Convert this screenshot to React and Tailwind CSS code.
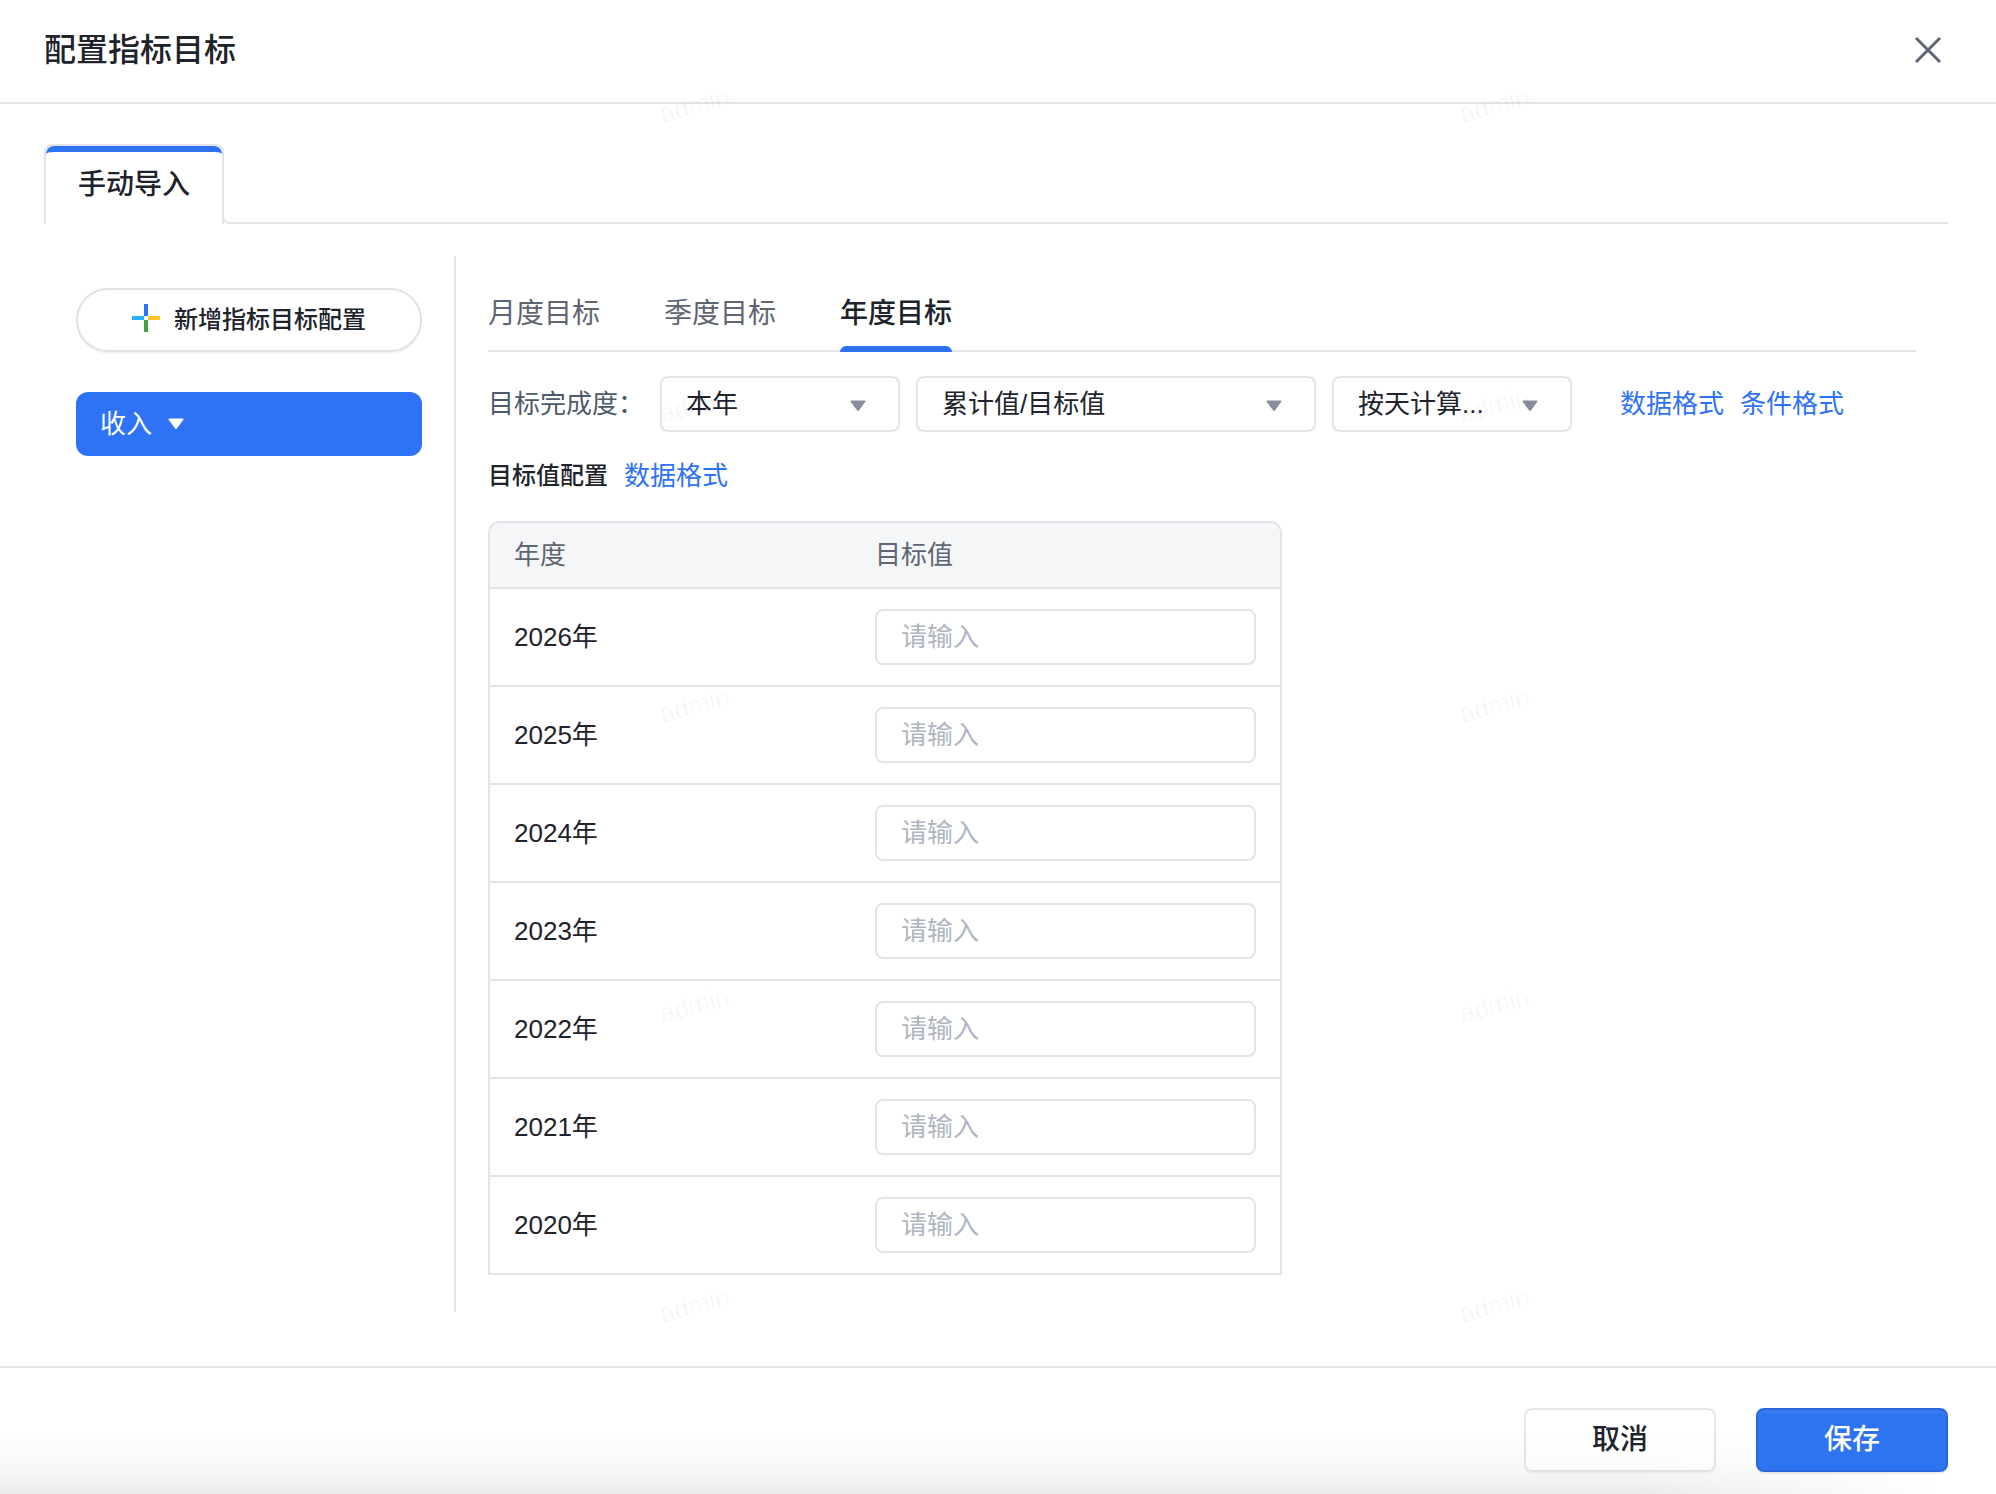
import { useState } from "react";

const YEARS = [2026, 2025, 2024, 2023, 2022, 2021, 2020];
const TABS = ["月度目标", "季度目标", "年度目标"];
const MARKS = Array.from({ length: 10 }, (_, i) => i);

function Caret({ className }) {
  return (
    <svg viewBox="0 0 16 12" className={className} fill="currentColor" aria-hidden="true">
      <path d="M1.4 .5h13.2c.8 0 1.1.9.6 1.5L8.9 10.6c-.5.6-1.3.6-1.8 0L.8 2C.3 1.4.6.5 1.4.5z" />
    </svg>
  );
}

function Select({ id, label, options, className }) {
  return (
    <div className={`relative ${className}`}>
      <select
        id={id}
        aria-label={label}
        className="block h-14 w-full appearance-none rounded-lg border-2 border-[#e3e3ea] bg-white pr-16 pl-6 text-[26px] text-[#20232c] outline-none"
      >
        {options.map((o) => (
          <option key={o}>{o}</option>
        ))}
      </select>
      <Caret className="pointer-events-none absolute top-6 right-[34px] h-3 w-4 text-[#878f9f]" />
    </div>
  );
}

function Link({ children }) {
  return (
    <a href="#" className="text-[26px] leading-9 text-[#2e73f5]">
      {children}
    </a>
  );
}

function Watermark() {
  return (
    <div
      aria-hidden="true"
      className="pointer-events-none absolute inset-0 grid auto-rows-[300px] grid-cols-[800px_800px] overflow-hidden select-none"
    >
      {MARKS.map((m) => (
        <div key={m} className="flex items-start justify-end pt-[87px] pr-[70px]">
          <span className="-rotate-15 font-['Liberation_Sans'] text-[26px] leading-9 text-black/4">admin</span>
        </div>
      ))}
    </div>
  );
}

export default function App() {
  const [tab, setTab] = useState("年度目标");

  return (
    <div className="relative flex min-h-screen flex-col bg-white font-['Liberation_Sans','Noto_Sans_CJK_SC',sans-serif] text-[#20232c]">
      <header className="flex h-26 items-center justify-between border-b-2 border-[#e3e3ea] pr-12 pb-0.5 pl-11">
        <h1 className="text-[32px] leading-12 font-medium">配置指标目标</h1>
        <button type="button" aria-label="关闭" className="p-1.5 text-[#5e6573]">
          <svg viewBox="0 0 28 28" className="size-7" fill="none" stroke="currentColor" strokeWidth="3" aria-hidden="true">
            <path d="M2 2l24 24M26 2L2 26" />
          </svg>
        </button>
      </header>

      <main className="flex flex-1 flex-col pt-10 pr-12 pb-[54px] pl-11">
        <div className="flex items-stretch">
          <div className="h-20 overflow-hidden rounded-t-lg border-2 border-b-0 border-[#e3e3ea]">
            <button
              type="button"
              className="h-full rounded-t-lg border-t-6 border-[#2e73f5] px-8 pb-1.5 text-[28px] font-medium"
            >
              手动导入
            </button>
          </div>
          <div className="-ml-0.5 flex-1 rounded-bl-lg border-b-2 border-l-2 border-[#e3e3ea] [clip-path:inset(60px_0_0_0)]" />
        </div>

        <div className="mt-8 flex flex-1">
          <aside className="flex w-[412px] shrink-0 flex-col gap-10 border-r-2 border-[#e3e3ea] p-8">
            <button
              type="button"
              className="flex h-16 w-full items-center justify-center gap-3.5 rounded-full border-2 border-[#e2e2e4] text-2xl font-medium shadow-[0_2px_0_#f5f5f5]"
            >
              <svg viewBox="0 0 28 32" className="h-8 w-7" aria-hidden="true">
                <path d="M12 0h4v12h-4z" fill="#2e73f5" />
                <path d="M16 12h12v4H16z" fill="#ffc52b" />
                <path d="M12 16h4v12h-4z" fill="#43a047" />
                <path d="M0 12h12v4H0z" fill="#29b0ff" />
              </svg>
              新增指标目标配置
            </button>
            <button
              type="button"
              className="flex h-16 w-full items-center gap-4 rounded-xl bg-[#2e73f5] px-6 text-[26px] text-white"
            >
              收入
              <Caret className="h-3 w-4" />
            </button>
          </aside>

          <section className="min-w-0 flex-1 px-8">
            <div role="tablist" className="flex h-24 items-end gap-16 border-b-2 border-[#e3e3ea]">
              {TABS.map((t) => (
                <button
                  key={t}
                  type="button"
                  role="tab"
                  aria-selected={t === tab}
                  onClick={() => setTab(t)}
                  className={
                    t === tab
                      ? "relative h-18 text-[28px] font-medium after:absolute after:inset-x-0 after:-bottom-0.5 after:h-1.5 after:rounded-t-md after:bg-[#2e73f5]"
                      : "h-18 text-[28px] text-[#5e6573]"
                  }
                >
                  {t}
                </button>
              ))}
            </div>

            <div className="mt-6 flex items-center gap-4">
              <label htmlFor="period" className="text-[26px] leading-9 text-[#4e5969]">
                目标完成度：
              </label>
              <Select id="period" label="目标完成度" options={["本年"]} className="w-60" />
              <Select id="formula" label="计算方式" options={["累计值/目标值"]} className="w-100" />
              <Select id="grain" label="计算粒度" options={["按天计算..."]} className="w-60" />
              <div className="ml-8 flex gap-4">
                <Link>数据格式</Link>
                <Link>条件格式</Link>
              </div>
            </div>

            <div className="mt-[26px] flex items-center gap-4">
              <h2 className="text-2xl leading-9 font-medium">目标值配置</h2>
              <Link>数据格式</Link>
            </div>

            <div className="mt-[27px] w-[794px] overflow-hidden rounded-t-xl border-2 border-b-0 border-[#e3e3ea]">
              <table className="w-full table-fixed text-left text-[26px]">
                <thead>
                  <tr className="h-[65px] border-b-2 border-[#e3e3ea] bg-[#f5f6f8] text-[#5e6573]">
                    <th scope="col" className="w-[361px] px-6 py-0 font-normal">年度</th>
                    <th scope="col" className="px-6 py-0 font-normal">目标值</th>
                  </tr>
                </thead>
                <tbody>
                  {YEARS.map((y) => (
                    <tr key={y} className="h-[98px] border-b-2 border-[#e3e3ea]">
                      <td className="px-6 py-0">
                        <label htmlFor={`target-${y}`}>{y}年</label>
                      </td>
                      <td className="px-6 py-0">
                        <input
                          id={`target-${y}`}
                          type="text"
                          placeholder="请输入"
                          className="block h-14 w-full rounded-lg border-2 border-[#e3e3ea] bg-white px-6 text-[26px] outline-none placeholder:text-[#b0b5c2]"
                        />
                      </td>
                    </tr>
                  ))}
                </tbody>
              </table>
            </div>
          </section>
        </div>
      </main>

      <footer className="flex h-32 items-center justify-end gap-10 border-t-2 border-[#e3e3ea] bg-[linear-gradient(to_right,transparent_82%,white_97%),linear-gradient(to_bottom,white_50%,#f7f7f7_80%,#ebebeb)] px-12 pt-10 pb-[22px]">
        <button
          type="button"
          className="h-16 w-48 rounded-lg border-2 border-black/10 bg-white/50 text-[28px] font-medium shadow-[0_2px_0_rgba(0,0,0,0.04)]"
        >
          取消
        </button>
        <button
          type="button"
          className="h-16 w-48 rounded-lg border-2 border-[#2a68de] bg-[#2e73f0] text-[28px] font-medium text-white shadow-[0_2px_0_rgba(0,0,0,0.08),inset_0_4px_0_rgba(255,255,255,0.05)]"
        >
          保存
        </button>
      </footer>

      <Watermark />
    </div>
  );
}
